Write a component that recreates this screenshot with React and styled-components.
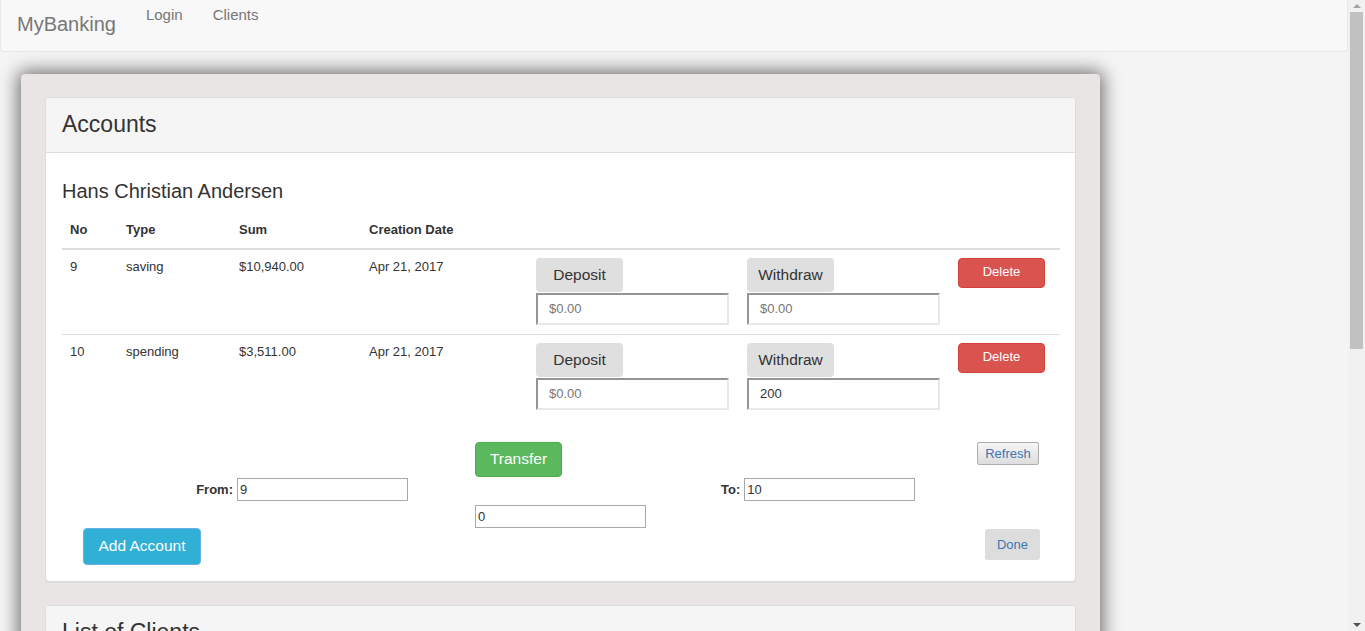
import React from 'react';
import styled, { createGlobalStyle } from 'styled-components';

const GlobalStyle = createGlobalStyle`
  html, body {
    margin: 0;
    padding: 0;
    height: 100%;
    overflow: hidden;
  }
  body {
    background: #f4f4f4;
    font-family: "Liberation Sans", Arial, sans-serif;
    font-size: 13px;
    color: #333;
  }
  * { box-sizing: border-box; }
`;

const Viewport = styled.div`
  display: flex;
  height: 100vh;
  overflow: hidden;
`;

const Page = styled.div`
  flex: 1;
  min-width: 0;
  overflow: hidden;
`;

const ScrollTrack = styled.div`
  width: 17px;
  flex-shrink: 0;
  background: #f1f1f1;
  display: flex;
  flex-direction: column;
  align-items: center;
`;

const ScrollArrow = styled.div`
  height: 12px;
  width: 17px;
  display: flex;
  align-items: center;
  justify-content: center;
  &::before {
    content: '';
    border-left: 4px solid transparent;
    border-right: 4px solid transparent;
    ${(p) => (p.$down ? 'border-top: 4px solid #505050;' : 'border-bottom: 4px solid #a3a3a3;')}
  }
`;

const ScrollThumb = styled.div`
  width: 13px;
  height: 337px;
  background: #c1c1c1;
`;

const ScrollSpacer = styled.div`
  flex: 1;
`;

const Navbar = styled.nav`
  height: 52px;
  background: #f8f8f8;
  border: 1px solid #e7e7e7;
  border-top: none;
  border-radius: 0 0 4px 4px;
  display: flex;
  align-items: flex-start;
`;

const Brand = styled.a`
  font-size: 20px;
  line-height: 20px;
  color: #777;
  padding: 14px 15px 0 16px;
  text-decoration: none;
`;

const NavLink = styled.a`
  font-size: 15px;
  line-height: 20px;
  color: #777;
  padding-top: 5px;
  margin-left: ${(p) => p.$gap}px;
  text-decoration: none;
`;

const Card = styled.div`
  margin: 22px 0 0 21px;
  width: 1079px;
  background: #e8e5e4;
  border-radius: 4px;
  padding: 23px 24px;
  box-shadow: 0 0 18px 3px rgba(0, 0, 0, 0.55);
`;

const Panel = styled.div`
  background: #fff;
  border: 1px solid #ddd;
  border-radius: 4px;
  box-shadow: 0 1px 1px rgba(0, 0, 0, 0.05);
  margin-bottom: 23px;
`;

const PanelHeading = styled.div`
  height: 55px;
  background: #f5f5f5;
  border-bottom: 1px solid #ddd;
  border-radius: 3px 3px 0 0;
  padding: 0 16px;
  display: flex;
  align-items: center;
`;

const PanelTitle = styled.h3`
  margin: 0;
  font-size: 23px;
  font-weight: 400;
  line-height: 1.1;
  color: #333;
`;

const PanelBody = styled.div`
  padding: 15px 15px 16px 16px;
`;

const ClientName = styled.h4`
  margin: 12px 0 11px;
  font-size: 20px;
  font-weight: 400;
  line-height: 1.1;
  color: #333;
`;

const Table = styled.table`
  width: 100%;
  border-collapse: collapse;
  table-layout: fixed;
`;

const Th = styled.th`
  text-align: left;
  font-weight: 700;
  font-size: 13px;
  line-height: 18.6px;
  padding: 8px;
  border-bottom: 2px solid #ddd;
  vertical-align: bottom;
`;

const Td = styled.td`
  font-size: 13px;
  line-height: 18.6px;
  padding: 8px 8px 9px;
  border-top: 1px solid #ddd;
  vertical-align: top;
`;

const ActionCell = styled.div`
  display: flex;
  flex-direction: column;
  align-items: flex-start;
  gap: 1px;
`;

const GreyButton = styled.button`
  width: 87px;
  height: 34px;
  background: #dfdfdf;
  border: none;
  border-radius: 4px;
  font-family: inherit;
  font-size: 15.5px;
  color: #333;
  padding: 0;
`;

const AmountInput = styled.input`
  width: 193px;
  height: 32px;
  border-style: solid;
  border-width: 2px;
  border-color: #959595 #e8e8e8 #e8e8e8 #959595;
  padding: 0 11px;
  font-family: inherit;
  font-size: 13px;
  color: #333;
  &::placeholder { color: #777; }
`;

const DeleteButton = styled.button`
  width: 87px;
  height: 30px;
  background: #d9534f;
  border: 1px solid #d43f3a;
  border-radius: 4px;
  color: #fff;
  font-family: inherit;
  font-size: 13px;
  padding: 0 0 2px;
`;

const TransferGrid = styled.div`
  margin-top: 23px;
  display: grid;
  grid-template-columns: 413px 245px 257px 1fr;
  align-items: start;
`;

const Cell = styled.div`
  grid-column: ${(p) => p.$col};
  grid-row: ${(p) => p.$row};
  justify-self: ${(p) => p.$justify || 'start'};
  margin: ${(p) => p.$m || '0'};
  display: flex;
  align-items: center;
  gap: 4px;
`;

const ColorButton = styled.button`
  width: ${(p) => p.$w}px;
  height: ${(p) => p.$h}px;
  background: ${(p) => p.$bg};
  border: 1px solid ${(p) => p.$border};
  border-radius: 4px;
  color: #fff;
  font-family: inherit;
  font-size: 15.5px;
  padding: 0;
`;

const SystemButton = styled.button`
  width: 62px;
  height: 23px;
  background: linear-gradient(#f6f6f6, #dddddd);
  border: 1px solid #adadad;
  border-radius: 2px;
  color: #3f74b3;
  font-family: inherit;
  font-size: 13px;
  padding: 0;
`;

const DoneButton = styled.button`
  width: 55px;
  height: 31px;
  background: #dddddd;
  border: none;
  border-radius: 3px;
  color: #3f74b3;
  font-family: inherit;
  font-size: 13px;
  padding: 0;
`;

const Label = styled.label`
  font-weight: 700;
  font-size: 13px;
`;

const PlainInput = styled.input`
  width: 171px;
  height: 23px;
  border: 1px solid #a9a9a9;
  padding: 1px 2px;
  font-family: inherit;
  font-size: 13px;
  color: #333;
`;

const ClientRow = styled.div`
  padding: 10px 0;
  border-top: 1px solid #ddd;
  font-size: 13px;
`;

const accounts = [
  { no: 9, type: 'saving', sum: '$10,940.00', date: 'Apr 21, 2017', withdraw: '' },
  { no: 10, type: 'spending', sum: '$3,511.00', date: 'Apr 21, 2017', withdraw: '200' },
];

const AccountRow = ({ acc }) => (
  <tr>
    <Td>{acc.no}</Td>
    <Td>{acc.type}</Td>
    <Td>{acc.sum}</Td>
    <Td>{acc.date}</Td>
    <Td>
      <ActionCell>
        <GreyButton>Deposit</GreyButton>
        <AmountInput placeholder="$0.00" defaultValue="" />
      </ActionCell>
    </Td>
    <Td>
      <ActionCell>
        <GreyButton>Withdraw</GreyButton>
        <AmountInput placeholder="$0.00" defaultValue={acc.withdraw} />
      </ActionCell>
    </Td>
    <Td>
      <DeleteButton>Delete</DeleteButton>
    </Td>
  </tr>
);

const App = () => {
  return (
    <Viewport>
      <GlobalStyle />
      <Page>
        <Navbar>
          <Brand>MyBanking</Brand>
          <NavLink $gap={15}>Login</NavLink>
          <NavLink $gap={30}>Clients</NavLink>
        </Navbar>

        <Card>
          <Panel>
            <PanelHeading>
              <PanelTitle>Accounts</PanelTitle>
            </PanelHeading>
            <PanelBody>
              <ClientName>Hans Christian Andersen</ClientName>
              <Table>
                <colgroup>
                  <col style={{ width: 56 }} />
                  <col style={{ width: 113 }} />
                  <col style={{ width: 130 }} />
                  <col style={{ width: 167 }} />
                  <col style={{ width: 211 }} />
                  <col style={{ width: 211 }} />
                  <col />
                </colgroup>
                <thead>
                  <tr>
                    <Th>No</Th>
                    <Th>Type</Th>
                    <Th>Sum</Th>
                    <Th>Creation Date</Th>
                    <Th />
                    <Th />
                    <Th />
                  </tr>
                </thead>
                <tbody>
                  {accounts.map((a) => (
                    <AccountRow key={a.no} acc={a} />
                  ))}
                </tbody>
              </Table>

              <TransferGrid>
                <Cell $col={2} $row={1}>
                  <ColorButton $w={87} $h={35} $bg="#5cb85c" $border="#4cae4c">Transfer</ColorButton>
                </Cell>
                <Cell $col={4} $row={1}>
                  <SystemButton>Refresh</SystemButton>
                </Cell>
                <Cell $col={1} $row={2} $justify="end" $m="1px 67px 0 0">
                  <Label>From:</Label>
                  <PlainInput defaultValue="9" />
                </Cell>
                <Cell $col={3} $row={2} $m="1px 0 0 1px">
                  <Label>To:</Label>
                  <PlainInput defaultValue="10" />
                </Cell>
                <Cell $col={2} $row={3} $m="4px 0 0 0">
                  <PlainInput defaultValue="0" />
                </Cell>
                <Cell $col={1} $row={4} $m="0 0 0 21px">
                  <ColorButton $w={118} $h={37} $bg="#31b0d5" $border="#66afe9">Add Account</ColorButton>
                </Cell>
                <Cell $col={4} $row={4} $m="1px 0 0 8px">
                  <DoneButton>Done</DoneButton>
                </Cell>
              </TransferGrid>
            </PanelBody>
          </Panel>

          <Panel>
            <PanelHeading>
              <PanelTitle>List of Clients</PanelTitle>
            </PanelHeading>
            <PanelBody>
              <ClientRow>Hans Christian Andersen</ClientRow>
              <ClientRow>Karen Blixen</ClientRow>
            </PanelBody>
          </Panel>
        </Card>
      </Page>
      <ScrollTrack>
        <ScrollArrow />
        <ScrollThumb />
        <ScrollSpacer />
        <ScrollArrow $down />
      </ScrollTrack>
    </Viewport>
  );
};

export default App;
